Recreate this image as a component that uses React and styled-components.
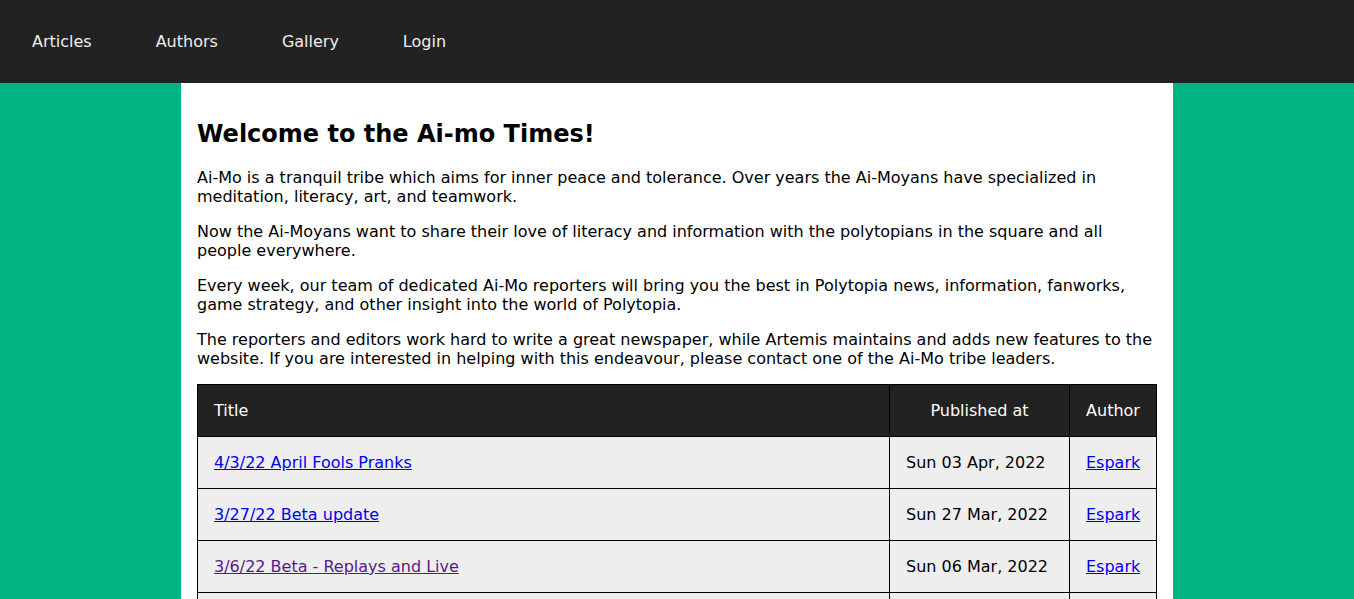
import React from "react";
import styled, { createGlobalStyle } from "styled-components";

const GlobalStyle = createGlobalStyle`
  body {
    margin: 0;
    background: #00b383;
    font-family: "DejaVu Sans", sans-serif;
    font-size: 16px;
  }
`;

const Nav = styled.nav`
  display: flex;
  background: #222;
`;

const NavLink = styled.a`
  display: block;
  padding: 32px;
  color: #eee;
  text-decoration: none;
  line-height: 19px;
`;

const Main = styled.main`
  width: 992px;
  margin: 0 auto;
  background: #fff;
  padding: 16px;
  box-sizing: border-box;
`;

const Heading = styled.h1`
  font-size: 24px;
  margin: 21px 0 20px;
`;

const Para = styled.p`
  margin: 16px 0;
  line-height: 19px;
`;

const Table = styled.table`
  width: 100%;
  table-layout: fixed;
  border-collapse: collapse;
  border: 1px solid #000;
`;

const Col = styled.col`
  width: ${(p) => p.$width || "auto"};
`;

const Th = styled.th`
  background: #222;
  color: #fff;
  font-weight: normal;
  padding: 16px;
  line-height: 19px;
  border: 1px solid #000;
  white-space: nowrap;
  text-align: ${(p) => p.$align || "center"};
`;

const Td = styled.td`
  background: #eee;
  padding: 16px;
  line-height: 19px;
  border: 1px solid #000;
  white-space: ${(p) => (p.$nowrap ? "nowrap" : "normal")};
`;

const Link = styled.a`
  color: ${(p) => (p.$visited ? "#551a8b" : "#0000ee")};
  text-decoration: underline;
`;

const articles = [
  { title: "4/3/22 April Fools Pranks", date: "Sun 03 Apr, 2022", author: "Espark" },
  { title: "3/27/22 Beta update", date: "Sun 27 Mar, 2022", author: "Espark" },
  { title: "3/6/22 Beta - Replays and Live", date: "Sun 06 Mar, 2022", author: "Espark", visited: true },
  { title: "2/27/22 Weekly news", date: "Sun 27 Feb, 2022", author: "Espark" },
  { title: "2/20/22 Weekly news", date: "Sun 20 Feb, 2022", author: "Espark" },
];

export default function App() {
  return (
    <>
      <GlobalStyle />
      <Nav>
        <NavLink href="#">Articles</NavLink>
        <NavLink href="#">Authors</NavLink>
        <NavLink href="#">Gallery</NavLink>
        <NavLink href="#">Login</NavLink>
      </Nav>
      <Main>
        <Heading>Welcome to the Ai-mo Times!</Heading>
        <Para>
          Ai-Mo is a tranquil tribe which aims for inner peace and tolerance. Over years the Ai-Moyans have
          specialized in meditation, literacy, art, and teamwork.
        </Para>
        <Para>
          Now the Ai-Moyans want to share their love of literacy and information with the polytopians in the
          square and all people everywhere.
        </Para>
        <Para>
          Every week, our team of dedicated Ai-Mo reporters will bring you the best in Polytopia news,
          information, fanworks, game strategy, and other insight into the world of Polytopia.
        </Para>
        <Para>
          The reporters and editors work hard to write a great newspaper, while Artemis maintains and adds new
          features to the website. If you are interested in helping with this endeavour, please contact one of
          the Ai-Mo tribe leaders.
        </Para>
        <Table>
          <colgroup>
            <Col />
            <Col $width="180px" />
            <Col $width="87px" />
          </colgroup>
          <thead>
            <tr>
              <Th $align="left">Title</Th>
              <Th>Published at</Th>
              <Th>Author</Th>
            </tr>
          </thead>
          <tbody>
            {articles.map((a) => (
              <tr key={a.title}>
                <Td>
                  <Link href="#" $visited={a.visited}>{a.title}</Link>
                </Td>
                <Td $nowrap>{a.date}</Td>
                <Td $nowrap>
                  <Link href="#">{a.author}</Link>
                </Td>
              </tr>
            ))}
          </tbody>
        </Table>
      </Main>
    </>
  );
}
